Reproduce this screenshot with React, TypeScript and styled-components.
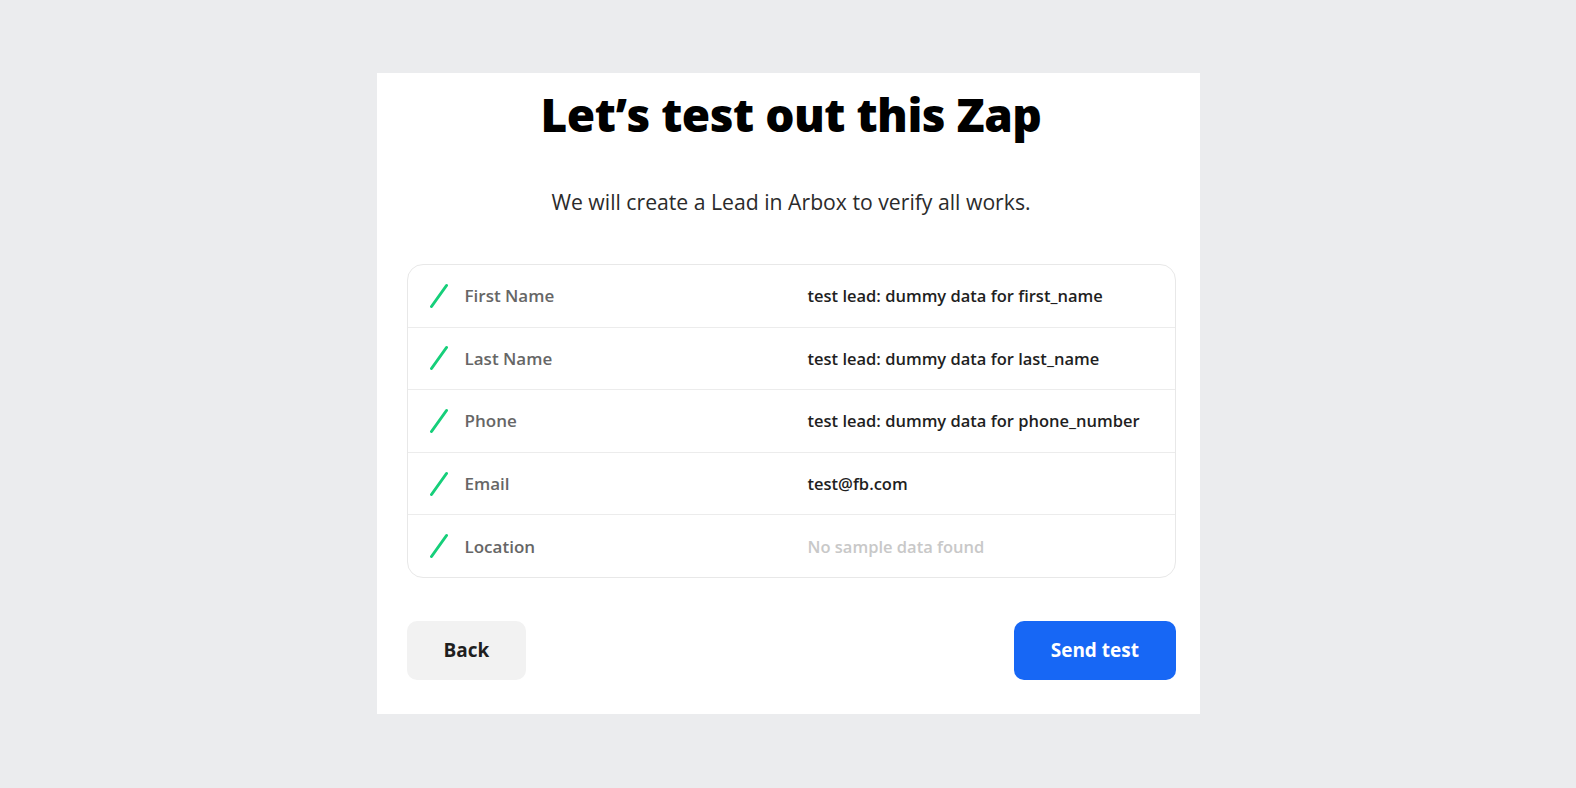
import React from 'react';
import styled, { createGlobalStyle } from 'styled-components';

const GlobalStyle = createGlobalStyle`
  html, body {
    margin: 0;
    padding: 0;
    background: #ebecee;
    font-family: 'Open Sans', 'Noto Sans', sans-serif;
  }
`

const Page = styled.div`
  width: 1576px;
  height: 788px;
  display: flex;
  justify-content: center;
  align-items: flex-start;
  padding-top: 73px;
  box-sizing: border-box;
`

const Card = styled.div`
  width: 823px;
  background: #fff;
  padding: 10px 24px 34px 30px;
  box-sizing: border-box;
  display: flex;
  flex-direction: column;
`

const Title = styled.h1`
  margin: 0;
  text-align: center;
  font-size: 46px;
  font-weight: 800;
  line-height: normal;
  color: #000;
  letter-spacing: -0.5px;
`

const Subtitle = styled.p`
  margin: 43px 0 0;
  text-align: center;
  font-size: 21.2px;
  font-weight: 400;
  color: #2b2b2b;
  line-height: 28px;
`

const Table = styled.div`
  margin-top: 48px;
  border: 1px solid #e8e8e8;
  border-radius: 16px;
  overflow: hidden;
`

const Row = styled.div`
  display: grid;
  grid-template-columns: 35px 343px 1fr;
  align-items: center;
  height: 61.6px;
  padding-left: 22px;
  & + & {
    border-top: 1px solid #ececec;
  }
`

const Label = styled.span`
  font-size: 17px;
  font-weight: 600;
  color: #666;
`

interface ValueProps {
  empty?: boolean
}

const Value = styled.span<ValueProps>`
  font-size: 16.5px;
  font-weight: 600;
  color: ${props => props.empty ? '#c8c8c8' : '#1f1f1f'};
`

const Actions = styled.div`
  margin-top: 43px;
  display: flex;
  justify-content: space-between;
`

interface ButtonProps {
  primary?: boolean
}

const Button = styled.button<ButtonProps>`
  height: 59px;
  padding: 0 ${props => props.primary ? '36.5px' : '37px'};
  border: none;
  border-radius: 10px;
  font-family: 'Open Sans', 'Noto Sans', sans-serif;
  font-size: 19px;
  font-weight: 700;
  cursor: pointer;
  background: ${props => props.primary ? '#1767f5' : '#f2f2f2'};
  color: ${props => props.primary ? '#fff' : '#1f1f1f'};
`

function Slash() {
  return <svg width="20" height="26" viewBox="0 0 20 26">
    <line x1="1.5" y1="23.5" x2="16.5" y2="2.5" stroke="#16cf7a" strokeWidth="3" strokeLinecap="round" />
  </svg>;
}

const fields = [
  { label: 'First Name', value: 'test lead: dummy data for first_name' },
  { label: 'Last Name', value: 'test lead: dummy data for last_name' },
  { label: 'Phone', value: 'test lead: dummy data for phone_number' },
  { label: 'Email', value: 'test@fb.com' },
  { label: 'Location', value: '' },
];

export default function App() {
  return <>
    <GlobalStyle />
    <Page>
      <Card>
        <Title>Let’s test out this Zap</Title>
        <Subtitle>We will create a Lead in Arbox to verify all works.</Subtitle>
        <Table>
          {fields.map(f => <Row key={f.label}>
            <Slash />
            <Label>{f.label}</Label>
            <Value empty={!f.value}>{f.value || 'No sample data found'}</Value>
          </Row>)}
        </Table>
        <Actions>
          <Button>Back</Button>
          <Button primary>Send test</Button>
        </Actions>
      </Card>
    </Page>
  </>;
}
